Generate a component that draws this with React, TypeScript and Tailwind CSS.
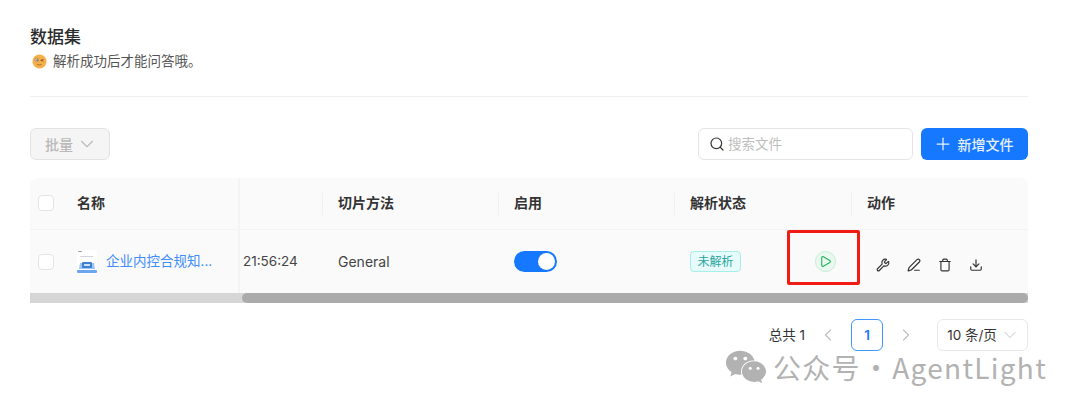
import { ChevronDown, ChevronLeft, ChevronRight, Download, PenLine, Play, Plus, Search, Trash, Wrench } from "lucide-react";
import { FaWeixin } from "react-icons/fa";

const font = { fontFamily: '"Inter", "Noto Sans CJK SC", sans-serif' };

function Wink() {
  return (
    <svg width="15" height="15" viewBox="0 0 16 16" className="shrink-0">
      <circle cx="8" cy="8" r="7.5" fill="#f6b04a" />
      <circle cx="5.2" cy="6.4" r="2" fill="#fff" stroke="#8a5a20" strokeWidth="0.6" />
      <circle cx="5.4" cy="6.5" r="0.9" fill="#4a3420" />
      <path d="M9.3 6.8l3-1.2M9.3 6.8l3 .8" stroke="#6b4518" strokeWidth="0.8" fill="none" />
      <path d="M5.5 11c1.6 1 3.6 1 5 -.3" stroke="#8a5a20" strokeWidth="0.8" fill="none" />
    </svg>
  );
}

function DocThumb() {
  return (
    <svg width="20" height="24" viewBox="0 0 20 24" className="shrink-0">
      <rect width="20" height="24" fill="#fff" />
      <rect x="1" y="1" width="4" height="1" fill="#9ca3af" />
      <rect x="3" y="6" width="13" height="1" fill="#d1d5db" />
      <path d="M3 13h14l1 6H2z" fill="#9cc4f5" />
      <rect x="5" y="12" width="10" height="6" rx="1" fill="#3f7fd0" />
      <rect x="7" y="14" width="6" height="2" fill="#cfe2fb" />
      <rect x="0" y="20" width="20" height="3" rx="1" fill="#6aa5ee" />
    </svg>
  );
}

function Checkbox() {
  return <div className="h-4 w-4 rounded-[4px] border border-[#e4e4e4] bg-white" />;
}

function HeadCell({ label, sep = true, width }: { label?: string; sep?: boolean; width: string }) {
  return (
    <div className={`relative flex h-full items-center pb-[2px] pl-4 text-[14px] font-semibold text-[#333] ${width}`}>
      {sep && <span className="absolute left-0 top-1/2 h-[22px] w-px -translate-y-1/2 bg-[#f0f0f0]" />}
      {label}
    </div>
  );
}

export default function App() {
  return (
    <div className="relative h-[410px] w-[1080px] overflow-hidden bg-white px-[30px] pt-[26px]" style={font}>
      <h1 className="text-[17px] font-medium leading-[22px] text-[#2b2b2b]">数据集</h1>
      <div className="mt-[3px] flex items-center gap-[6px] pl-[2px] text-[13.5px] leading-[20px] text-[#555]">
        <Wink />
        <span>解析成功后才能问答哦。</span>
      </div>
      <div className="mt-[25px] h-px w-[998px] bg-[#efefef]" />

      <div className="mt-[31px] flex h-8 w-[998px] items-center justify-between">
        <div className="flex h-8 w-20 items-center justify-center gap-[3px] rounded-md border border-[#e3e3e3] bg-[#f5f5f5] pl-[3px] text-[14px] font-medium text-[#b9b9b9]">
          批量
          <ChevronDown size={22} strokeWidth={1.2} />
        </div>
        <div className="flex items-center gap-2">
          <div className="flex h-8 w-[215px] items-center gap-[3px] rounded-md border border-[#e5e5e5] bg-white pl-[10px] text-[13.5px] text-[#bdbdbd]">
            <Search size={16} strokeWidth={1.8} className="text-[#333]" />
            搜索文件
          </div>
          <div className="flex h-8 w-[107px] items-center justify-center gap-[5px] rounded-md bg-[#1677ff] pr-[3px] text-[14px] font-medium text-white/90">
            <Plus size={20} strokeWidth={1.5} />
            新增文件
          </div>
        </div>
      </div>

      <div className="relative mt-[18px] w-[998px] overflow-hidden rounded-t-lg bg-[#fafafa]">
        <div className="flex h-[52px] items-center border-b border-[#f3f3f3]">
          <div className="flex h-full w-[208px] items-center gap-[23px] pb-[2px] pl-2 text-[14px] font-semibold text-[#333]">
            <Checkbox />
            <span>名称</span>
          </div>
          <HeadCell sep={false} width="w-[84px]" />
          <HeadCell label="切片方法" width="w-[176px]" />
          <HeadCell label="启用" width="w-[176px]" />
          <HeadCell label="解析状态" width="w-[177px]" />
          <HeadCell label="动作" width="w-[177px]" />
        </div>

        <div className="flex h-[63px] items-center text-[14px] text-[#444]">
          <div className="flex h-full w-[208px] items-center pl-2">
            <Checkbox />
            <div className="ml-[23px]">
              <DocThumb />
            </div>
            <span className="ml-[9px] text-[13.5px] text-[#3f8efc]">企业内控合规知...</span>
          </div>
          <div className="flex w-[84px] items-center text-[13.5px]">
            <span className="mr-[3px] h-[2px] w-[2px] rounded-full bg-[#aaa]" />
            21:56:24
          </div>
          <div className="w-[176px] pl-4">General</div>
          <div className="w-[176px] pl-4">
            <div className="flex h-[21px] w-[43px] items-center justify-end rounded-full bg-[#1677ff] pr-[2px]">
              <span className="h-[17px] w-[17px] rounded-full bg-white" />
            </div>
          </div>
          <div className="flex w-[177px] items-center pl-4">
            <span className="flex h-[21px] w-[51px] items-center justify-center rounded-[4px] border border-[#a5eeea] bg-[#e6fbfa] text-[12px] text-[#2aa5a0]">
              未解析
            </span>
            <span className="ml-[74px] flex h-[21px] w-[21px] items-center justify-center rounded-full border border-[#c5ecd2] bg-[#e9f9ef]">
              <Play size={13} strokeWidth={2} className="text-[#22b45e]" />
            </span>
          </div>
          <div className="flex w-[177px] translate-y-[3px] items-center gap-[17px] pl-[25px] text-[#333]">
            <Wrench size={14} strokeWidth={2} />
            <PenLine size={14} strokeWidth={2} />
            <Trash size={14} strokeWidth={2} />
            <Download size={14} strokeWidth={2} />
          </div>
        </div>

        <div className="h-[10px] bg-[#d6d6d6] pl-[212px]">
          <div className="h-full rounded-full bg-[#ababab]" />
        </div>

        <div className="absolute bottom-[10px] left-[208px] top-0 w-[2px] bg-[#f4f4f4]" />
      </div>

      <div className="mt-[16px] flex h-8 w-[998px] items-center justify-end text-[13.5px] text-[#333]">
        <span>总共 1</span>
        <ChevronLeft size={20} strokeWidth={1.3} className="ml-[13px] text-[#bdbdbd]" />
        <span className="ml-[13px] flex h-8 w-8 items-center justify-center rounded-md border border-[#4096ff] font-semibold text-[#1677ff]">
          1
        </span>
        <ChevronRight size={20} strokeWidth={1.3} className="ml-[13px] text-[#bdbdbd]" />
        <span className="ml-[21px] flex h-8 w-[91px] items-center justify-center gap-[3px] rounded-md border border-[#e8e8e8] pl-[2px]">
          10 条/页
          <ChevronDown size={20} strokeWidth={1.2} className="text-[#c4c4c4]" />
        </span>
      </div>

      {/* screenshot annotation */}
      <div className="absolute left-[787px] top-[230px] h-[55px] w-[73px] rounded-[2px] border-[3px] border-[#f01c14]" />

      {/* watermark */}
      <div className="absolute left-[725px] top-[345px] flex h-[44px] items-center text-[#b2b2b2]">
        <FaWeixin size={42} />
        <span className="ml-[6px] whitespace-nowrap text-[28px] leading-none tracking-[1.3px]" style={{ fontFamily: '"Noto Sans CJK SC", sans-serif' }}>
          公众号<span className="mx-[1px]">·</span>AgentLight
        </span>
      </div>
    </div>
  );
}
